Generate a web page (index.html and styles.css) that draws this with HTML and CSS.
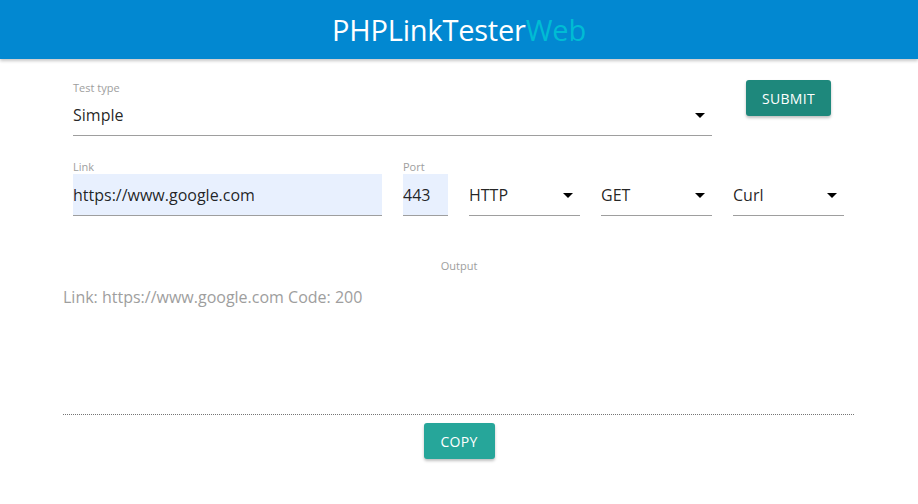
FILE: index.html
```html
<!DOCTYPE html>
<html>
<head>
<meta charset="utf-8">
<title>PHPLinkTesterWeb</title>
<link rel="stylesheet" href="styles.css">
</head>
<body>
<header class="topbar">
  <h1 class="title">PHPLinkTester<span class="title-accent">Web</span></h1>
</header>
<main class="page">
  <form class="form">
    <div class="row row-top">
      <div class="field field-wide">
        <label class="label">Test type</label>
        <div class="select"><span class="value">Simple</span><span class="caret"></span></div>
      </div>
      <div class="btn-col">
        <button type="button" class="btn btn-submit">SUBMIT</button>
      </div>
    </div>
    <div class="row row-second">
      <div class="field field-link">
        <label class="label">Link</label>
        <div class="input filled"><span class="value">https://www.google.com</span></div>
      </div>
      <div class="field field-port">
        <label class="label">Port</label>
        <div class="input filled"><span class="value">443</span></div>
      </div>
      <div class="field field-sel">
        <label class="label">&nbsp;</label>
        <div class="select"><span class="value">HTTP</span><span class="caret"></span></div>
      </div>
      <div class="field field-sel">
        <label class="label">&nbsp;</label>
        <div class="select"><span class="value">GET</span><span class="caret"></span></div>
      </div>
      <div class="field field-sel">
        <label class="label">&nbsp;</label>
        <div class="select"><span class="value">Curl</span><span class="caret"></span></div>
      </div>
    </div>
  </form>
  <section class="output">
    <div class="output-label">Output</div>
    <div class="output-box">Link: https://www.google.com Code: 200</div>
    <div class="copy-row">
      <button type="button" class="btn btn-copy">COPY</button>
    </div>
  </section>
</main>
</body>
</html>
```

FILE: styles.css
```css
* { box-sizing: border-box; }
html, body { margin: 0; padding: 0; background: #fff; }
body {
  font-family: "Open Sans", "Noto Sans", sans-serif;
  color: rgba(0,0,0,0.87);
  width: 918px;
  height: 504px;
  overflow: hidden;
}
.topbar {
  height: 59px;
  background: #0288d1;
  display: flex;
  align-items: center;
  justify-content: center;
  box-shadow: 0 2px 3px rgba(0,0,0,0.22);
  position: relative;
  z-index: 1;
}
.title {
  margin: 0;
  font-weight: 400;
  font-size: 29px;
  color: #fff;
  letter-spacing: -0.2px;
  line-height: 1;
  padding-bottom: 1px;
}
.title-accent { color: #00bcd4; }

.page {
  padding: 22px 64px 0 63px;
}
.form { padding: 0 10px; }
.row { display: flex; gap: 21px; }
.row-second { margin-top: 24px; }
.field { display: flex; flex-direction: column; }
.field-wide { width: 639px; }
.field-link { width: 309px; }
.field-port { width: 45px; }
.field-sel { width: 111px; }
.btn-col { width: 111px; display: flex; justify-content: center; }
.label {
  font-size: 11px;
  line-height: 13px;
  height: 13px;
  color: #9e9e9e;
  margin-bottom: 1px;
}
.row-top .label { margin-bottom: 0; }
.select, .input {
  height: 42px;
  border-bottom: 1px solid #9e9e9e;
  display: flex;
  align-items: center;
  font-size: 16px;
  position: relative;
}
.input.filled { background: #e8f0fe; }
.value { line-height: 1; padding-top: 1px; }
.select .caret {
  position: absolute;
  right: 7px;
  top: 19px;
  width: 0; height: 0;
  border-left: 5px solid transparent;
  border-right: 5px solid transparent;
  border-top: 5px solid #000;
}
.btn {
  border: none;
  border-radius: 3px;
  color: #fff;
  font-family: inherit;
  font-size: 14px;
  letter-spacing: 0.3px;
  height: 36px;
  padding: 0 16px;
  box-shadow: 0 2px 3px rgba(0,0,0,0.25);
  cursor: pointer;
}
.btn-submit { background: #1e887c; width: 85px; margin-top: -1px; }
.btn-copy { background: #26a69a; width: 71px; }

.output { margin-top: 43px; }
.output-label {
  text-align: center;
  font-size: 11px;
  line-height: 13px;
  color: #9e9e9e;
  padding-left: 1px;
}
.output-box {
  margin-top: 12px;
  height: 131px;
  border-bottom: 1px dotted #757575;
  font-size: 16px;
  color: #9e9e9e;
  line-height: 20px;
  padding-top: 3px;
}
.copy-row { display: flex; justify-content: center; margin-top: 8px; padding-left: 1px; }
```
